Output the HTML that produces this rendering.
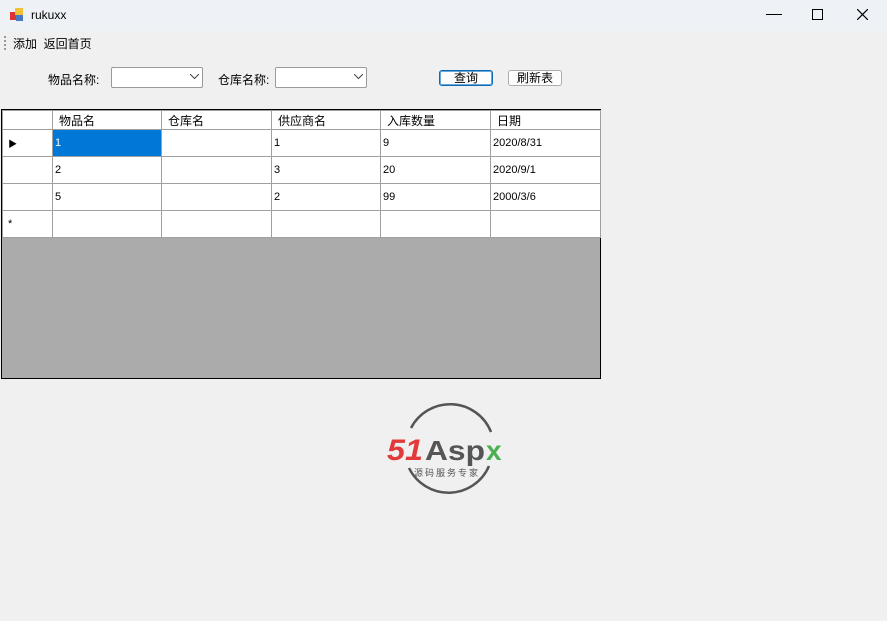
<!DOCTYPE html><html><head><style>
body{margin:0;width:887px;height:621px;background:#f0f0f0;font-family:"Liberation Sans","Noto Sans CJK SC",sans-serif;font-size:12px;position:relative;overflow:hidden;color:#000}
.a{position:absolute}
.tb{left:0;top:0;width:887px;height:31px;background:#eef2f6}
.combo{height:19px;background:#fff;border:1px solid #9a9a9a;border-radius:2px}
.btn{height:14px;border:1px solid #adadad;border-radius:3px;background:#fdfdfd;text-align:center;line-height:14px}
table{border-collapse:collapse;position:absolute;left:2px;top:110px;table-layout:fixed;width:598px}
td{border:1px solid #a0a0a0;height:26px;padding:0 2px;font-size:11px;background:#fff;vertical-align:middle;overflow:hidden;white-space:nowrap}
tr.h td{height:18px;font-size:12px;padding-left:6px}
</style></head><body>
<div class="a tb"></div>
<svg class="a" style="left:10px;top:8px" width="14" height="14"><rect x="0" y="4" width="7" height="8" fill="#d33"/><rect x="5" y="0" width="8" height="7" fill="#f3c23a"/><rect x="6" y="7" width="7" height="6" fill="#4a78c8"/></svg>
<div class="a" style="left:31px;top:8px;font-size:12px">rukuxx</div>
<div class="a" style="left:766px;top:14px;width:16px;height:1px;background:#000"></div>
<div class="a" style="left:812px;top:9px;width:9px;height:9px;border:1px solid #000"></div>
<svg class="a" style="left:857px;top:9px" width="11" height="11"><path d="M0 0L11 11M11 0L0 11" stroke="#000" stroke-width="1.2"/></svg>
<div class="a" style="left:4px;top:36px;width:1px;height:14px;border-left:2px dotted #999"></div>
<div class="a" style="left:13px;top:35px;font-size:12px">添加&nbsp;&nbsp;返回首页</div>
<div class="a" style="left:48px;top:71px;font-size:12px">物品名称:</div>
<div class="a combo" style="left:111px;top:67px;width:90px"><svg class="a" style="left:78px;top:6px" width="9" height="6"><path d="M0 0L4.5 4.5L9 0" stroke="#444" fill="none"/></svg></div>
<div class="a" style="left:218px;top:71px;font-size:12px">仓库名称:</div>
<div class="a combo" style="left:275px;top:67px;width:90px"><svg class="a" style="left:78px;top:6px" width="9" height="6"><path d="M0 0L4.5 4.5L9 0" stroke="#444" fill="none"/></svg></div>
<div class="a btn" style="left:439px;top:70px;width:52px;border:1px solid #0a6bb5;box-shadow:inset 0 0 0 1px #6aa6d8">查询</div>
<div class="a btn" style="left:508px;top:70px;width:52px">刷新表</div>
<div class="a" style="left:1px;top:109px;width:598px;height:268px;background:#ababab;border:1px solid #000"></div>
<table>
<colgroup><col style="width:50px"><col style="width:109px"><col style="width:110px"><col style="width:109px"><col style="width:110px"><col style="width:110px"></colgroup>
<tr class="h"><td></td><td>物品名</td><td>仓库名</td><td>供应商名</td><td>入库数量</td><td>日期</td></tr>
<tr><td>&nbsp;<span style="font-size:9px">&#9654;</span></td><td style="background:#0078d7;color:#fff">1</td><td></td><td>1</td><td>9</td><td>2020/8/31</td></tr>
<tr><td></td><td>2</td><td></td><td>3</td><td>20</td><td>2020/9/1</td></tr>
<tr><td></td><td>5</td><td></td><td>2</td><td>99</td><td>2000/3/6</td></tr>
<tr><td>&nbsp;*</td><td></td><td></td><td></td><td></td><td></td></tr>
</table>
<svg class="a" style="left:385px;top:400px" width="130" height="96">
<path d="M26 28A44 44 0 0 1 106 32" stroke="#555" stroke-width="2.5" fill="none"/>
<path d="M104 66A44 44 0 0 1 24 68" stroke="#555" stroke-width="2.5" fill="none"/>
<text x="2" y="60" font-family="Liberation Sans" font-weight="bold" font-style="italic" font-size="30" fill="#e23a3a" textLength="36" lengthAdjust="spacingAndGlyphs">51</text>
<text x="40" y="60" font-family="Liberation Sans" font-weight="bold" font-size="28" fill="#555" textLength="60" lengthAdjust="spacingAndGlyphs">Asp</text>
<text x="101" y="60" font-family="Liberation Sans" font-weight="bold" font-size="28" fill="#4caf50">x</text>
<text x="29" y="76" font-family="Noto Sans CJK SC" font-size="9" fill="#555" textLength="64">源码服务专家</text>
</svg>
</body></html>
